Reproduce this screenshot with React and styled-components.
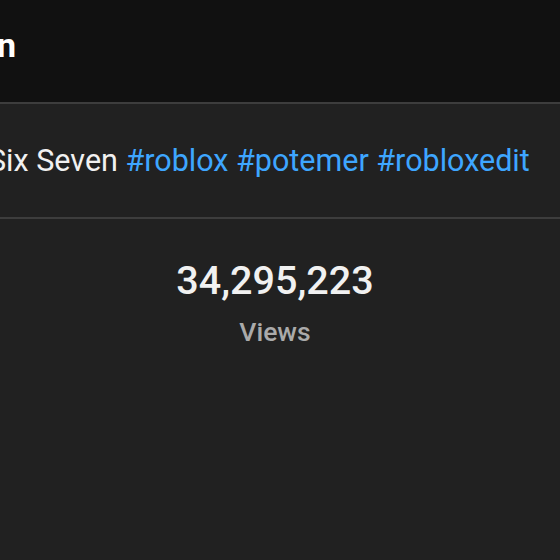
import React from "react";
import styled, { createGlobalStyle } from "styled-components";

const Global = createGlobalStyle`
  html, body { margin: 0; padding: 0; background: #212121; }
  body { font-family: Roboto, "Noto Sans", Arial, sans-serif; overflow: hidden; }
`;

const Panel = styled.div`
  width: 560px;
  height: 560px;
  display: flex;
  flex-direction: column;
  background: #212121;
  overflow: hidden;
`;

const Header = styled.header`
  height: 104px;
  flex-shrink: 0;
  box-sizing: border-box;
  padding-bottom: 12px;
  background: #111111;
  border-bottom: 2px solid #3d3d3d;
  display: flex;
  align-items: center;
  white-space: nowrap;
`;

const Title = styled.h2`
  margin: 0 0 0 -159px;
  font-size: 34px;
  font-weight: 700;
  color: #ffffff;
`;

const Description = styled.section`
  height: 113px;
  flex-shrink: 0;
  background: #212121;
  border-bottom: 2px solid #3d3d3d;
  display: flex;
  align-items: center;
  white-space: nowrap;
`;

const DescText = styled.p`
  margin: 0 0 0 -12px;
  font-size: 30.5px;
  color: #f1f1f1;
`;

const Tag = styled.span`
  color: #3ea6ff;
`;

const Stats = styled.div`
  display: flex;
  flex-direction: column;
  align-items: center;
  padding: 40px 10px 0 0;
  gap: 14px;
`;

const Count = styled.div`
  font-size: 39.5px;
  font-weight: 500;
  color: #f1f1f1;
  line-height: 44px;
`;

const Label = styled.div`
  font-size: 26.5px;
  font-weight: 500;
  color: #aaaaaa;
  line-height: 30px;
`;

export default function App() {
  return (
    <>
      <Global />
      <Panel>
        <Header>
          <Title>Description</Title>
        </Header>
        <Description>
          <DescText>
            Six Seven <Tag>#roblox</Tag> <Tag>#potemer</Tag> <Tag>#robloxedit</Tag>
          </DescText>
        </Description>
        <Stats>
          <Count>34,295,223</Count>
          <Label>Views</Label>
        </Stats>
      </Panel>
    </>
  );
}
